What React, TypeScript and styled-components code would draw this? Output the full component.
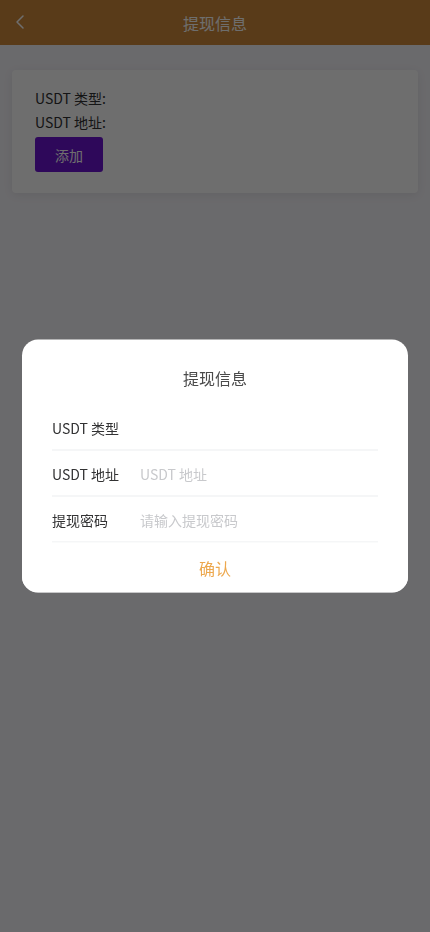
import React from 'react';
import styled, { createGlobalStyle } from 'styled-components';
import { ChevronLeft } from 'lucide-react';

const GlobalStyle = createGlobalStyle`
  html, body {
    margin: 0;
    padding: 0;
    background: #f6f5fa;
    font-family: "Noto Sans CJK SC", "Noto Sans", sans-serif;
  }
  * { box-sizing: border-box; }
`;

const Page = styled.div`
  min-height: 932px;
  background: #f6f5fa;
`;

const NavBar = styled.header`
  position: relative;
  height: 45px;
  background: #cf8a3a;
  display: flex;
  align-items: center;
  justify-content: center;
`;

const BackButton = styled.button`
  position: absolute;
  left: 8px;
  top: 10px;
  padding: 0;
  border: 0;
  background: none;
  color: #fff;
  display: flex;
`;

const NavTitle = styled.h1`
  margin: 0;
  font-size: 16px;
  font-weight: 400;
  color: #fff;
`;

const Card = styled.section`
  margin: 25px 12px 0;
  padding: 16px 23px 21px;
  background: #fff;
  box-shadow: 0 2px 10px rgba(0, 0, 0, 0.08);
  border-radius: 4px;
`;

const InfoLine = styled.div`
  font-size: 14px;
  line-height: 24px;
  color: #323233;
`;

const AddButton = styled.button`
  margin-top: 3px;
  width: 68px;
  height: 35px;
  border: 0;
  border-radius: 3px;
  background: #6c14d0;
  color: #fff;
  font-family: inherit;
  font-size: 14px;
`;

const Overlay = styled.div`
  position: fixed;
  inset: 0;
  background: rgba(0, 0, 0, 0.57);
`;

const Dialog = styled.div`
  position: fixed;
  left: 22px;
  right: 22px;
  top: 50%;
  transform: translateY(-50%);
  background: #fff;
  border-radius: 16px;
  overflow: hidden;
`;

const DialogTitle = styled.div`
  padding-top: 26px;
  line-height: 24px;
  font-size: 16px;
  text-align: center;
  color: #4a4a4a;
`;

const Fields = styled.div`
  margin-top: 15px;
  padding: 0 30px;
`;

const Field = styled.div`
  display: flex;
  align-items: center;
  height: 46px;
  border-bottom: 1px solid #ebedf0;
  font-size: 14px;
`;

const Label = styled.span`
  width: 88px;
  flex: none;
  color: #323233;
`;

const Input = styled.input`
  flex: 1;
  min-width: 0;
  border: 0;
  padding: 0;
  outline: none;
  background: none;
  font-family: inherit;
  font-size: 14px;
  color: #323233;
  &::placeholder { color: #c8c9cc; }
`;

const Footer = styled.button`
  display: block;
  width: 100%;
  height: 50px;
  border: 0;
  background: #fff;
  font-family: inherit;
  font-size: 16px;
  color: #eda84e;
`;

export default function App() {
  return (
    <>
      <GlobalStyle />
      <Page>
        <NavBar>
          <BackButton>
            <ChevronLeft size={24} strokeWidth={1.5} />
          </BackButton>
          <NavTitle>提现信息</NavTitle>
        </NavBar>
        <Card>
          <InfoLine>USDT 类型:</InfoLine>
          <InfoLine>USDT 地址:</InfoLine>
          <AddButton>添加</AddButton>
        </Card>
      </Page>
      <Overlay />
      <Dialog>
        <DialogTitle>提现信息</DialogTitle>
        <Fields>
          <Field>
            <Label>USDT 类型</Label>
          </Field>
          <Field>
            <Label>USDT 地址</Label>
            <Input placeholder="USDT 地址" />
          </Field>
          <Field>
            <Label>提现密码</Label>
            <Input type="password" placeholder="请输入提现密码" />
          </Field>
        </Fields>
        <Footer>确认</Footer>
      </Dialog>
    </>
  );
}
